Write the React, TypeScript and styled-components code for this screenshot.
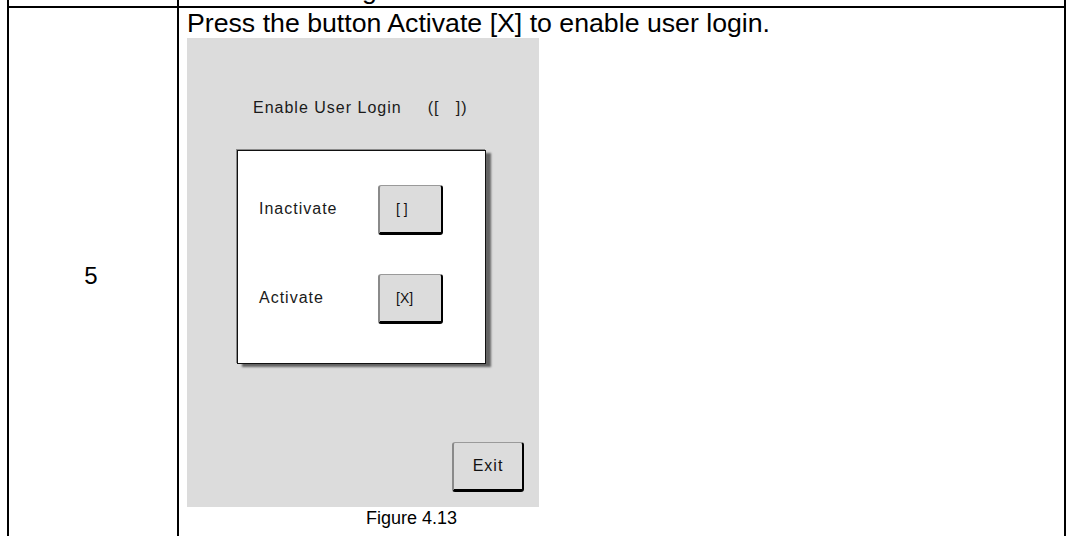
import React from "react";
import styled, { createGlobalStyle } from "styled-components";

const GlobalStyle = createGlobalStyle`
  html, body { margin: 0; padding: 0; background: #ffffff; }
  body {
    font-family: "Liberation Sans", Arial, sans-serif;
    color: #000;
    overflow: hidden;
  }
`;

const Page = styled.div`
  width: 1066px;
  height: 536px;
  overflow: hidden;
  box-sizing: border-box;
  padding-left: 7px;
`;

const Table = styled.div`
  border-left: 2px solid #000;
  border-right: 2px solid #000;
`;

const Row = styled.div<{ $clip?: boolean }>`
  display: grid;
  grid-template-columns: 170px 1fr;
  ${(p) =>
    p.$clip
      ? `height: 6px; overflow: hidden; border-bottom: 2px solid #000;`
      : ``}
`;

const NumberCell = styled.div`
  border-right: 2px solid #000;
  display: flex;
  align-items: center;
  justify-content: center;
  padding-right: 4px;
  font-size: 24px;
`;

const ContentCell = styled.div<{ $prev?: boolean }>`
  display: flex;
  flex-direction: column;
  align-items: flex-start;
  padding: 0 0 14px 8px;
  ${(p) =>
    p.$prev
      ? `justify-content: flex-end; padding-bottom: 3px; height: 6px; box-sizing: border-box;`
      : ``}
`;

const Instruction = styled.div<{ $tight?: boolean }>`
  font-size: 26.7px;
  line-height: ${(p) => (p.$tight ? "26px" : "30px")};
  white-space: nowrap;
`;

const Panel = styled.div`
  width: 352px;
  height: 469px;
  box-sizing: border-box;
  background: #dcdcdc;
  display: flex;
  flex-direction: column;
  padding-top: 61px;
`;

const Title = styled.div`
  display: flex;
  gap: 26px;
  margin-left: 66px;
  font-size: 16px;
  line-height: 18px;
  letter-spacing: 1px;
  color: #1a1a1a;
  white-space: pre;
`;

const Dialog = styled.div`
  margin: 33px 0 0 50px;
  width: 249px;
  height: 214px;
  box-sizing: border-box;
  background: #ffffff;
  border: 1px solid #111;
  box-shadow: -1px -1px 0 #8a8a8a, 5px 3px 2px rgba(0, 0, 0, 0.55);
  padding-top: 34px;
  display: flex;
  flex-direction: column;
  gap: 39px;
`;

const OptionRow = styled.div`
  display: grid;
  grid-template-columns: 119px 65px;
  align-items: center;
  padding-left: 21px;
`;

const Label = styled.span`
  font-size: 16px;
  letter-spacing: 1px;
  color: #1a1a1a;
  margin-top: -3px;
`;

const Key = styled.button<{ $wide?: boolean }>`
  width: ${(p) => (p.$wide ? "72px" : "65px")};
  height: 50px;
  box-sizing: border-box;
  margin: 0;
  padding: 0 0 0 ${(p) => (p.$wide ? "0" : "16px")};
  background: #dcdcdc;
  border-radius: 3px;
  border-top: 1px solid #9a9a9a;
  border-left: 2px solid #8a8a8a;
  border-right: 2px solid #000;
  border-bottom: 3px solid #000;
  display: flex;
  align-items: center;
  justify-content: ${(p) => (p.$wide ? "center" : "flex-start")};
  font-family: "Liberation Sans", Arial, sans-serif;
  font-size: ${(p) => (p.$wide ? "16px" : "14px")};
  letter-spacing: ${(p) => (p.$wide ? "1px" : "0")};
  color: #111;
  white-space: pre;
`;

const ExitKey = styled(Key)`
  margin: auto 15px 15px auto;
`;

const Caption = styled.div`
  font-size: 18px;
  margin: 1px 0 0 179px;
  white-space: nowrap;
`;

export default function App() {
  return (
    <>
      <GlobalStyle />
      <Page>
        <Table>
          <Row $clip>
            <NumberCell />
            <ContentCell $prev>
              <Instruction $tight>Select User Login.</Instruction>
            </ContentCell>
          </Row>
          <Row>
            <NumberCell>5</NumberCell>
            <ContentCell>
              <Instruction>
                Press the button Activate [X] to enable user login.
              </Instruction>
              <Panel>
                <Title>
                  <span>Enable User Login</span>
                  <span>([   ])</span>
                </Title>
                <Dialog>
                  <OptionRow>
                    <Label>Inactivate</Label>
                    <Key>[ ]</Key>
                  </OptionRow>
                  <OptionRow>
                    <Label>Activate</Label>
                    <Key>[X]</Key>
                  </OptionRow>
                </Dialog>
                <ExitKey $wide>Exit</ExitKey>
              </Panel>
              <Caption>Figure 4.13</Caption>
            </ContentCell>
          </Row>
        </Table>
      </Page>
    </>
  );
}
